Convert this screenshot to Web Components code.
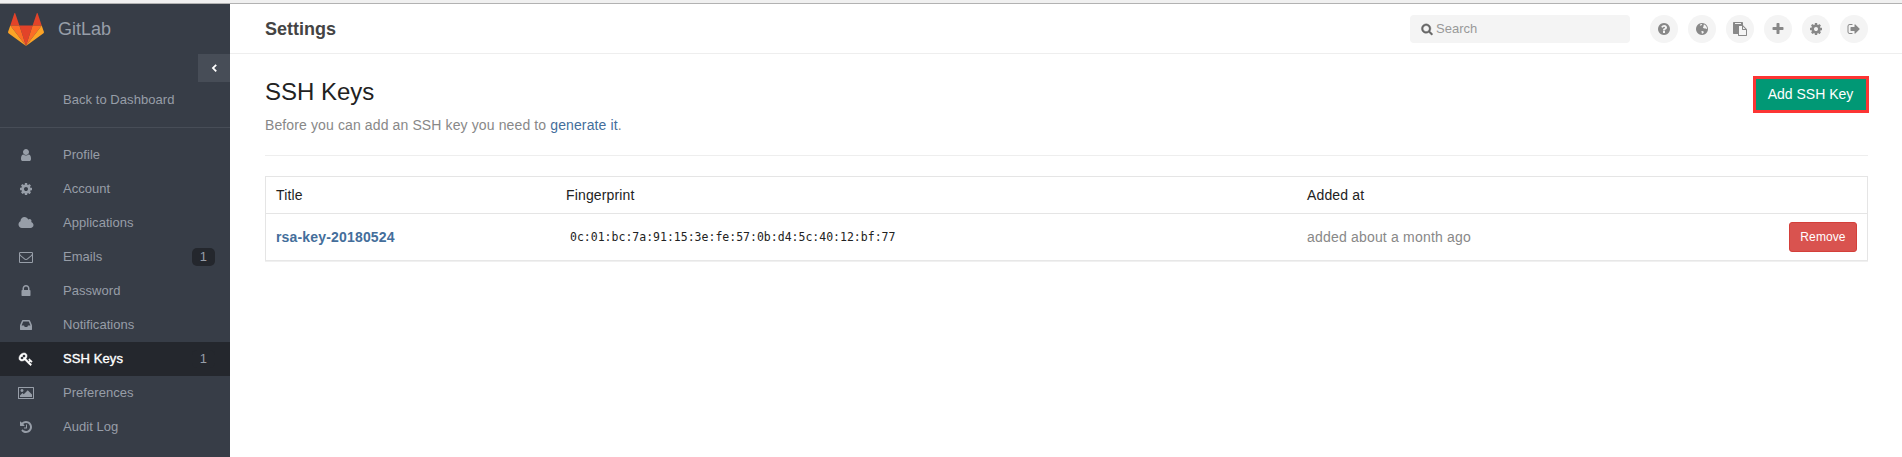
<!DOCTYPE html>
<html lang="en"><head><meta charset="utf-8"><title>SSH Keys · GitLab</title>
<style>html,body{margin:0;height:100%;overflow:hidden;background:#fff}body{font-family:"Liberation Sans",Arial,sans-serif}</style></head>
<body><gl-app></gl-app>
<script>
const P={
user:'M1536 1399q0 109-62.5 187t-150.5 78h-854q-88 0-150.5-78t-62.5-187q0-85 8.5-160.5t31.5-152 58.5-131 94-89 134.5-34.5q131 128 313 128t313-128q76 0 134.5 34.5t94 89 58.5 131 31.5 152 8.5 160.5zm-256-887q0 159-112.5 271.5t-271.5 112.5-271.5-112.5-112.5-271.5 112.5-271.5 271.5-112.5 271.5 112.5 112.5 271.5z',
cog:'M1152 896q0-106-75-181t-181-75-181 75-75 181 75 181 181 75 181-75 75-181zm512-109v222q0 12-8 23t-20 13l-185 28q-19 54-39 91 35 50 107 138 10 12 10 25t-9 23q-27 37-99 108t-94 71q-12 0-26-9l-138-108q-44 23-91 38-16 136-29 186-7 28-36 28h-222q-14 0-24.5-8.5t-11.5-21.5l-28-184q-49-16-90-37l-141 107q-10 9-25 9-14 0-25-11-126-114-165-168-7-10-7-23 0-12 8-23 15-21 51-66.5t54-70.5q-27-50-41-99l-183-27q-13-2-21-12.5t-8-23.5v-222q0-12 8-23t19-13l186-28q14-46 39-92-40-57-107-138-10-12-10-24 0-10 9-23 26-36 98.5-107.5t94.5-71.5q13 0 26 10l138 107q44-23 91-38 16-136 29-186 7-28 36-28h222q14 0 24.5 8.5t11.5 21.5l28 184q49 16 90 37l142-107q9-9 24-9 13 0 25 10 129 119 165 170 7 8 7 22 0 12-8 23-15 21-51 66.5t-54 70.5q26 50 41 98l183 28q13 2 21 12.5t8 23.5z',
cloud:'M1856 1152q0 159-112.5 271.5t-271.5 112.5h-1088q-185 0-316.5-131.5t-131.5-316.5q0-132 71-241.5t187-163.5q-2-28-2-43 0-212 150-362t362-150q158 0 286.5 88t187.5 230q70-62 166-62 106 0 181 75t75 181q0 75-41 138 129 30 213 134.5t84 239.5z',
mail:'M1664 1504v-768q-32 36-69 66-268 206-426 338-51 43-83 67t-86.5 48.5-102.5 24.5h-2q-48 0-102.5-24.5t-86.5-48.5-83-67q-158-132-426-338-37-30-69-66v768q0 13 9.5 22.5t22.5 9.5h1472q13 0 22.5-9.5t9.5-22.5zm0-1051v-24.5l-.5-13-3-12.5-5.5-9-9-7.5-14-2.5h-1472q-13 0-22.5 9.5t-9.5 22.5q0 168 147 284 193 152 401 317 6 5 35 29.5t46 37.5 44.5 31.5 50.5 27.5 43 9h2q20 0 43-9t50.5-27.5 44.5-31.5 46-37.5 35-29.5q208-165 401-317 54-43 100.5-115.5t46.5-131.5zm128-37v1088q0 66-47 113t-113 47h-1472q-66 0-113-47t-47-113v-1088q0-66 47-113t113-47h1472q66 0 113 47t47 113z',
lock:'M640 768h512v-192q0-106-75-181t-181-75-181 75-75 181v192zm832 96v576q0 40-28 68t-68 28h-960q-40 0-68-28t-28-68v-576q0-40 28-68t68-28h32v-192q0-184 132-316t316-132 316 132 132 316v192h32q40 0 68 28t28 68z',
inbox:'M1151 960h316q-1-3-2.5-8.5t-2.5-7.5l-212-496h-708l-212 496q-1 3-2.5 8.5t-2.5 7.5h316l95 192h320zm513 30v482q0 26-19 45t-45 19h-1408q-26 0-45-19t-19-45v-482q0-62 25-123l238-552q10-25 36.5-42t52.5-17h832q26 0 52.5 17t36.5 42l238 552q25 61 25 123z',
key:'M832 512q0-80-56-136t-136-56-136 56-56 136q0 42 19 83-41-19-83-19-80 0-136 56t-56 136 56 136 136 56 136-56 56-136q0-42-19-83 41 19 83 19 80 0 136-56t56-136zm851 704q0 17-49 66t-66 49q-9 0-28.5-16t-36.5-33-38.5-40-24.5-26l-96 96 220 220q28 28 28 68 0 42-39 81t-81 39q-40 0-68-28l-671-671q-176 131-365 131-163 0-265.5-102.5t-102.5-265.5q0-160 95-313t248-248 313-95q163 0 265.5 102.5t102.5 265.5q0 189-131 365l355 355 96-96q-3-3-26-24.5t-40-38.5-33-36.5-16-28.5q0-17 49-66t66-49q13 0 23 10 6 6 46 44.5t82 79.5 86.5 86 73 78 28.5 41z',
image:'M-64 128h1920q64 0 64 64v1408q0 64-64 64H-64q-64 0-64-64V192q0-64 64-64zM0 256V1536H1792V256zM384 384a192 192 0 1 1-1 0zM128 1408v-192l320-320 160 160 512-512 544 544v320z',
history:'M1664 896q0 156-61 298t-164 245-245 164-298 61q-172 0-327-72.5t-264-204.5q-7-10-6.5-22.5t8.5-20.5l137-138q10-9 25-9 16 2 23 12 73 95 179 147t225 52q104 0 198.5-40.5t163.5-109.5 109.5-163.5 40.5-198.5-40.5-198.5-109.5-163.5-163.5-109.5-198.5-40.5q-98 0-188 35.5t-160 101.5l137 138q31 30 14 69-17 40-59 40h-448q-26 0-45-19t-19-45v-448q0-42 40-59 39-17 69 14l130 129q107-101 244.5-156.5t284.5-55.5q156 0 298 61t245 164 164 245 61 298zm-640-288v448q0 14-9 23t-23 9h-320q-14 0-23-9t-9-23v-64q0-14 9-23t23-9h224v-352q0-14 9-23t23-9h64q14 0 23 9t9 23z',
search:'M1216 832q0-185-131.5-316.5t-316.5-131.5-316.5 131.5-131.5 316.5 131.5 316.5 316.5 131.5 316.5-131.5 131.5-316.5zm512 832q0 52-38 90t-90 38q-54 0-90-38l-343-342q-179 124-399 124-143 0-273.5-55.5t-225-150-150-225-55.5-273.5 55.5-273.5 150-225 225-150 273.5-55.5 273.5 55.5 225 150 150 225 55.5 273.5q0 220-124 399l343 343q37 37 37 90z',
help:'M1024 1376v-192q0-14-9-23t-23-9h-192q-14 0-23 9t-9 23v192q0 14 9 23t23 9h192q14 0 23-9t9-23zm256-672q0-88-55.5-163t-138.5-116-170-41q-243 0-371 213-15 24 8 42l132 100q7 6 19 6 16 0 25-12 53-68 86-92 34-24 86-24 48 0 85.5 26t37.5 59q0 38-20 61t-68 45q-63 28-115.5 86.5t-52.5 125.5v36q0 14 9 23t23 9h192q14 0 23-9t9-23q0-19 21.5-49.5t54.5-49.5q32-18 49-28.5t46-35 44.5-48 28-60.5 12.5-81zm384 192q0 209-103 385.5t-279.5 279.5-385.5 103-385.5-103-279.5-279.5-103-385.5 103-385.5 279.5-279.5 385.5-103 385.5 103 279.5 279.5 103 385.5z',
globe:'M896 128a768 768 0 1 1-1 0zM700 300L860 270 930 340 850 420 760 400 720 480 610 420zM1130 300L1330 420 1500 640 1540 860 1400 900 1340 800 1200 840 1060 760 1010 640 1110 560 1060 470 1150 400zM800 1180L960 1140 1130 1240 1100 1360 980 1480 880 1500 860 1340z',
paste:'M768 1664h896v-640h-416q-40 0-68-28t-28-68v-416h-384v1152zm256-1440v-64q0-13-9.5-22.5t-22.5-9.5h-704q-13 0-22.5 9.5t-9.5 22.5v64q0 13 9.5 22.5t22.5 9.5h704q13 0 22.5-9.5t9.5-22.5zm256 672h299l-299-299v299zm512 128v672q0 40-28 68t-68 28h-960q-40 0-68-28t-28-68v-160h-544q-40 0-68-28t-28-68v-1344q0-40 28-68t68-28h1088q40 0 68 28t28 68v328q21 13 36 28l408 408q28 28 48 76t20 88z',
plus:'M1600 736v192q0 40-28 68t-68 28h-416v416q0 40-28 68t-68 28h-192q-40 0-68-28t-28-68v-416h-416q-40 0-68-28t-28-68v-192q0-40 28-68t68-28h416v-416q0-40 28-68t68-28h192q40 0 68 28t28 68v416h416q40 0 68 28t28 68z',
out:'M704 1440q0 4 1 20t.5 26.5-3 23.5-10 19.5-20.5 6.5h-320q-119 0-203.5-84.5t-84.5-203.5v-704q0-119 84.5-203.5t203.5-84.5h320q13 0 22.5 9.5t9.5 22.5q0 4 1 20t.5 26.5-3 23.5-10 19.5-20.5 6.5h-320q-66 0-113 47t-47 113v704q0 66 47 113t113 47h312l11.5 1 11.5 3 8 5.5 7 9 2 13.5zm928-544q0 26-19 45l-544 544q-19 19-45 19t-45-19-19-45v-288h-448q-26 0-45-19t-19-45v-384q0-26 19-45t45-19h448v-288q0-26 19-45t45-19 45 19l544 544q19 19 19 45z',
left:'M1100 420L1260 580 920 910 1260 1240 1100 1400 600 910z'};
function define(name,html){
  const t=document.createElement('template');t.innerHTML=html;
  customElements.define(name,class extends HTMLElement{
    constructor(){super();this.attachShadow({mode:'open'}).append(t.content.cloneNode(true));}
  });
}
customElements.define('gl-icon',class extends HTMLElement{
  connectedCallback(){
    const s=this.shadowRoot||this.attachShadow({mode:'open'});
    s.innerHTML=`<style>:host{display:block;flex:none;width:var(--size,14px);height:var(--size,14px)}svg{display:block;width:100%;height:100%;overflow:visible;fill:currentColor;stroke:currentColor;stroke-width:var(--bold,0)}</style><svg viewBox="0 0 1792 1792"><path fill-rule="evenodd" d="${P[this.getAttribute('name')]}"/></svg>`;
  }
});
define('gl-nav-item',`<style>
:host{display:flex;align-items:center;box-sizing:border-box;height:34px;padding:0 15px 0 19px;color:#979ea8;font-size:13px;line-height:18px;letter-spacing:.04px}
.label{margin-left:30px;flex:1;white-space:nowrap}
slot[name=icon]{display:block;width:14px}
::slotted(b){font-weight:400;width:23px;height:18px;line-height:17px;border-radius:5px;background:#24272d;text-align:center}
:host([active]){background:#24272d;color:#fff;letter-spacing:.1px;-webkit-text-stroke:.35px #fff;--bold:70}
:host([active]) ::slotted(b){color:#979ea8;-webkit-text-stroke:0}
</style><slot name="icon"></slot><span class="label"><slot></slot></span><slot name="count"></slot>`);
define('gl-sidebar',`<style>
:host{display:flex;flex-direction:column;width:230px;flex:none;background:#373d47;color:#979ea8}
.brand{display:flex;align-items:center;height:50px;padding-left:8px;box-sizing:border-box;font-size:18px}
.brand svg{width:36px;height:33px;margin-right:14px}
.toggle{align-self:flex-end;display:flex;align-items:center;justify-content:center;width:32px;height:28px;background:#474d57;color:#fff}
.back{height:35px;line-height:35px;padding-left:63px;font-size:13px;letter-spacing:.05px}
hr{margin:10px 0;border:0;height:1px;flex:none;background:#474d57}
</style>
<div class="brand"><svg viewBox="0 0 36 33"><path fill="#e24329" d="M18 33L24.6 12.6H11.4zM2.3 12.6L6.3.4Q6.8-.6 7.3.4L11.4 12.6zM33.7 12.6L29.7.4Q29.2-.6 28.7.4L24.6 12.6z"/><path fill="#fc6d26" d="M18 33L11.4 12.6H2.3zM18 33L24.6 12.6H33.7z"/><path fill="#fca326" d="M2.3 12.6L.1 18.8Q-.1 19.6.5 20.2L18 33zM33.7 12.6L35.9 18.8Q36.1 19.6 35.5 20.2L18 33z"/></svg><span>GitLab</span></div>
<div class="toggle"><gl-icon name="left"></gl-icon></div>
<div class="back">Back to Dashboard</div><hr>
<gl-nav-item><gl-icon slot="icon" name="user"></gl-icon>Profile</gl-nav-item>
<gl-nav-item><gl-icon slot="icon" name="cog"></gl-icon>Account</gl-nav-item>
<gl-nav-item><gl-icon slot="icon" name="cloud"></gl-icon>Applications</gl-nav-item>
<gl-nav-item><gl-icon slot="icon" name="mail"></gl-icon>Emails<b slot="count">1</b></gl-nav-item>
<gl-nav-item><gl-icon slot="icon" name="lock"></gl-icon>Password</gl-nav-item>
<gl-nav-item><gl-icon slot="icon" name="inbox"></gl-icon>Notifications</gl-nav-item>
<gl-nav-item active><gl-icon slot="icon" name="key"></gl-icon>SSH Keys<b slot="count">1</b></gl-nav-item>
<gl-nav-item><gl-icon slot="icon" name="image"></gl-icon>Preferences</gl-nav-item>
<gl-nav-item><gl-icon slot="icon" name="history"></gl-icon>Audit Log</gl-nav-item>`);
define('gl-header',`<style>
:host{display:flex;align-items:center;height:50px;box-sizing:border-box;border-bottom:1px solid #eee;padding:0 34px 0 35px}
h1{flex:1;margin:0;font-size:18px;line-height:24px;color:#444}
.search{display:flex;align-items:center;width:220px;height:28px;box-sizing:border-box;padding-left:11px;margin-right:20px;border-radius:4px;background:#f4f4f4;color:#999;font-size:13px;--size:12px;--bold:60}
.search gl-icon{color:#666;margin-right:3px}
nav{display:flex;gap:10px}
nav div{display:flex;align-items:center;justify-content:center;width:28px;height:28px;border-radius:50%;background:#f4f4f4;color:#888}
</style><h1>Settings</h1><div class="search"><gl-icon name="search"></gl-icon><span>Search</span></div>
<nav><div><gl-icon name="help"></gl-icon></div><div><gl-icon name="globe"></gl-icon></div><div><gl-icon name="paste"></gl-icon></div><div><gl-icon name="plus"></gl-icon></div><div><gl-icon name="cog"></gl-icon></div><div><gl-icon name="out"></gl-icon></div></nav>`);
define('gl-button',`<style>
:host{display:inline-block;box-sizing:border-box;text-align:center;color:#fff;white-space:nowrap}
:host([kind=add]){width:116px;height:37px;padding-right:1px;line-height:31px;border:3px solid #fc3534;background:#019875;font-size:14px}
:host([kind=remove]){width:68px;height:30px;line-height:28px;border:1px solid #d43f3a;border-radius:3px;background:#d9534f;font-size:12px;letter-spacing:.1px}
</style><slot></slot>`);
define('gl-key-table',`<style>
:host{display:block;border:1px solid #e5e5e5;border-bottom:0;box-shadow:0 1px 0 #e7e7e7,0 2px 0 #f0f0f0}
.r{display:grid;grid-template-columns:290px 741px 1fr auto;align-items:center;padding:0 10px}
.h{height:36px;border-bottom:1px solid #e5e5e5;font-size:14px;color:#222;letter-spacing:.15px}
.d{height:46px;font-size:14px}
b{color:#446e9b;letter-spacing:.17px}
code{font:11.5px "DejaVu Sans Mono","Liberation Mono",monospace;color:#222;padding-left:4px}
.ago{color:#888;letter-spacing:.19px}
</style>
<div class="r h"><span>Title</span><span>Fingerprint</span><span>Added at</span></div>
<div class="r d"><b>rsa-key-20180524</b><code>0c:01:bc:7a:91:15:3e:fe:57:0b:d4:5c:40:12:bf:77</code><span class="ago">added about a month ago</span><gl-button kind="remove">Remove</gl-button></div>`);
define('gl-app',`<style>
:host{display:flex;flex-direction:column;height:457px}
.edge{height:3px;flex:none;background:#f0f0f0;border-bottom:1px solid #b2b2b2}
.page{display:flex;flex:1;min-height:0}
main{flex:1;min-width:0}
section{padding:23px 34px 0 35px}
.top{display:flex;justify-content:space-between;align-items:flex-start;height:78px;border-bottom:1px solid #eee;margin-bottom:20px;font-size:14px;color:#888}
h2{margin:0;font-size:24px;font-weight:400;line-height:30px;color:#222}
p{margin:9px 0 0;line-height:18px;letter-spacing:.12px}a{color:#446e9b}
.top gl-button{margin:-1px -1px 0 0}
</style><div class="edge"></div><div class="page"><gl-sidebar></gl-sidebar><main><gl-header></gl-header><section>
<div class="top"><div><h2>SSH Keys</h2><p>Before you can add an SSH key you need to <a>generate it</a>.</p></div><gl-button kind="add">Add SSH Key</gl-button></div>
<gl-key-table></gl-key-table></section></main></div>`);
</script></body></html>
